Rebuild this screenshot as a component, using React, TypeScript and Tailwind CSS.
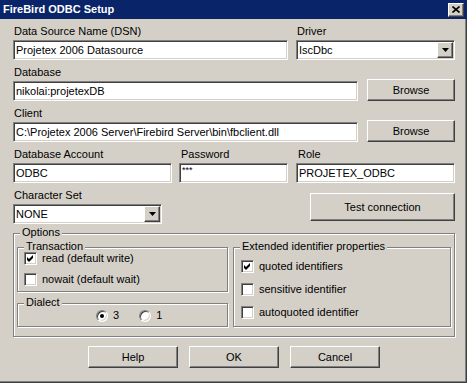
import React from "react";

const sunken =
  "bg-white border border-t-[#808080] border-l-[#808080] border-b-white border-r-white shadow-[inset_1px_1px_0_#404040,inset_-1px_-1px_0_#d4d0c8]";
const raised =
  "bg-[#d4d0c8] border border-t-white border-l-white border-b-[#404040] border-r-[#404040] shadow-[inset_-1px_-1px_0_#808080]";
const etched =
  "relative border border-[#808080] shadow-[inset_1px_1px_0_#ffffff,1px_1px_0_#ffffff]";

function Label({ children, pl = "pl-[1px]" }: { children: React.ReactNode; pl?: string }) {
  return <div className={`h-[13px] leading-[13px] whitespace-nowrap ${pl}`}>{children}</div>;
}

function Input({ value, cls = "" }: { value: string; cls?: string }) {
  return (
    <div className={`${sunken} h-[20px] mt-[2px] flex items-center pl-[2px] whitespace-nowrap overflow-hidden leading-none ${cls}`}>
      {value}
    </div>
  );
}

function Combo({ value }: { value: string }) {
  return (
    <div className={`${sunken} h-[20px] mt-[2px] flex items-center pl-[2px] pr-[1px] leading-none`}>
      <span className="flex-1 whitespace-nowrap">{value}</span>
      <div className={`${raised} w-[16px] h-[16px] flex items-center justify-center`}>
        <svg width="7" height="4" viewBox="0 0 7 4">
          <path d="M0 0 H7 L3.5 4 Z" fill="#000" />
        </svg>
      </div>
    </div>
  );
}

function Button({ children, cls }: { children: React.ReactNode; cls: string }) {
  return <div className={`${raised} flex items-center justify-center leading-none ${cls}`}>{children}</div>;
}

function Check({ checked, label }: { checked: boolean; label: string }) {
  return (
    <div className="relative z-10 flex items-center gap-[5px] h-[13px]">
      <div className={`${sunken} w-[13px] h-[13px] flex items-center justify-center`}>
        {checked && (
          <svg width="7" height="7" viewBox="0 0 7 7">
            <path d="M0 2 L2 4 L6 0 L6 3 L2 7 L0 5 Z" fill="#000" />
          </svg>
        )}
      </div>
      <span className="leading-none whitespace-nowrap">{label}</span>
    </div>
  );
}

function Radio({ checked }: { checked: boolean }) {
  return (
    <div className="w-[12px] h-[12px] rounded-full border border-t-[#808080] border-l-[#808080] border-b-white border-r-white bg-white shadow-[inset_1px_1px_0_#404040,inset_-1px_-1px_0_#d4d0c8] flex items-center justify-center">
      {checked && <div className="w-[4px] h-[4px] rounded-full bg-black" />}
    </div>
  );
}

function Legend({ children }: { children: React.ReactNode }) {
  return (
    <span className="absolute left-[6px] top-[-7px] px-[2px] bg-[#d4d0c8] leading-[11px] whitespace-nowrap">
      {children}
    </span>
  );
}

export default function App() {
  return (
    <div className="w-[467px] h-[383px] bg-[#d4d0c8] text-[11px] text-black font-['Liberation_Sans',Arial,sans-serif] flex flex-col shadow-[inset_-1px_-1px_0_#404040,inset_-2px_-2px_0_#808080]">
      <div className="h-[19px] bg-[#0a246a] flex items-center justify-between pl-[3px] pr-[3px]">
        <span className="text-white font-bold leading-none">FireBird ODBC Setup</span>
        <div className={`${raised} w-[16px] h-[14px] flex items-center justify-center`}>
          <svg width="8" height="7" viewBox="0 0 8 7">
            <path d="M0.5 0.5 L7.5 6.5 M7.5 0.5 L0.5 6.5" stroke="#000" strokeWidth="1.6" />
          </svg>
        </div>
      </div>

      <div className="flex flex-col pl-[13px] pr-[12px] pt-[6px]">
        <div className="flex gap-[8px]">
          <div className="w-[275px] flex flex-col">
            <Label>Data Source Name (DSN)</Label>
            <Input value="Projetex 2006 Datasource" />
          </div>
          <div className="w-[159px] flex flex-col">
            <Label>Driver</Label>
            <Combo value="IscDbc" />
          </div>
        </div>

        <div className="flex items-end gap-[9px] mt-[6px]">
          <div className="w-[345px] flex flex-col">
            <Label>Database</Label>
            <Input value="nikolai:projetexDB" />
          </div>
          <Button cls="w-[88px] h-[22px]">Browse</Button>
        </div>

        <div className="flex items-end gap-[9px] mt-[6px]">
          <div className="w-[345px] flex flex-col">
            <Label>Client</Label>
            <Input value="C:\Projetex 2006 Server\Firebird Server\bin\fbclient.dll" />
          </div>
          <Button cls="w-[88px] h-[22px]">Browse</Button>
        </div>

        <div className="flex mt-[6px]">
          <div className="w-[159px] flex flex-col">
            <Label>Database Account</Label>
            <Input value="ODBC" />
          </div>
          <div className="w-[109px] ml-[7px] flex flex-col">
            <Label pl="pl-[2px]">Password</Label>
            <Input value="***" cls="text-[9px] items-start pt-[2px]" />
          </div>
          <div className="w-[159px] ml-[8px] flex flex-col">
            <Label pl="pl-[2px]">Role</Label>
            <Input value="PROJETEX_ODBC" />
          </div>
        </div>

        <div className="flex justify-between items-start mt-[6px]">
          <div className="w-[149px] flex flex-col">
            <Label>Character Set</Label>
            <Combo value="NONE" />
          </div>
          <Button cls="w-[145px] h-[28px] mt-[4px]">Test connection</Button>
        </div>

        <div className={`${etched} mt-[9px] pt-[13px] pl-[3px] pr-[3px] pb-[9px]`}>
          <Legend>Options</Legend>
          <div className="flex gap-[5px]">
            <div className="w-[211px] flex flex-col gap-[11px]">
              <div className={`${etched} h-[45px] pt-[4px] pl-[6px] flex flex-col gap-[8px]`}>
                <Legend>Transaction</Legend>
                <Check checked label="read (default write)" />
                <Check checked={false} label="nowait (default wait)" />
              </div>
              <div className={`${etched} h-[24px] pl-[78px] pt-[1px] flex items-center`}>
                <Legend>Dialect</Legend>
                <div className="flex items-center gap-[5px]">
                  <Radio checked />
                  <span className="leading-none">3</span>
                </div>
                <div className="flex items-center gap-[5px] ml-[20px]">
                  <Radio checked={false} />
                  <span className="leading-none">1</span>
                </div>
              </div>
            </div>
            <div className={`${etched} flex-1 h-[80px] pt-[12px] pl-[7px] flex flex-col gap-[10px]`}>
              <Legend>Extended identifier properties</Legend>
              <Check checked label="quoted identifiers" />
              <Check checked={false} label="sensitive identifier" />
              <Check checked={false} label="autoquoted identifier" />
            </div>
          </div>
        </div>

        <div className="flex justify-center gap-[11px] mt-[9px]">
          <Button cls="w-[90px] h-[22px]">Help</Button>
          <Button cls="w-[90px] h-[22px]">OK</Button>
          <Button cls="w-[90px] h-[22px]">Cancel</Button>
        </div>
      </div>
    </div>
  );
}
